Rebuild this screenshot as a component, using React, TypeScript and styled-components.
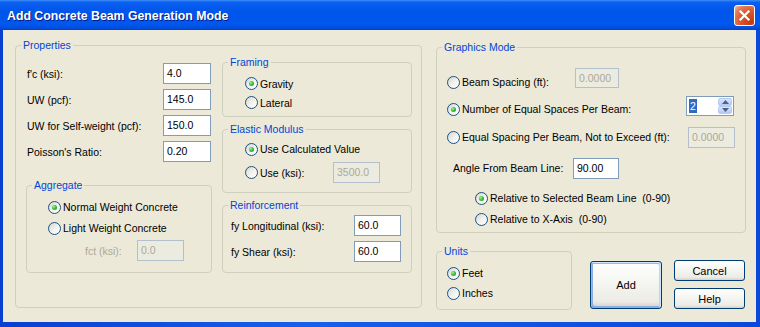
import styled, { createGlobalStyle } from 'styled-components';

const GlobalStyle = createGlobalStyle`
  html, body {
    margin: 0;
    padding: 0;
    background: #ece9d8;
  }

  body {
    font-family: 'Liberation Sans', Arial, sans-serif;
    font-size: 10.5px;
    color: #000;
  }

  * {
    box-sizing: border-box;
  }
`;

const Window = styled.div`
  width: 760px;
  height: 327px;
  display: flex;
  flex-direction: column;
  background: linear-gradient(to right, #0a3fd0, #1560ec 40%, #0a48dc);
  overflow: hidden;
`;

const TitleBar = styled.div`
  flex: none;
  height: 30px;
  display: flex;
  align-items: center;
  justify-content: space-between;
  padding: 0 5px 0 7px;
  background: linear-gradient(
    180deg,
    #3d8df5 0%,
    #0a5ef0 8%,
    #0055ea 40%,
    #0058ee 80%,
    #0050e0 92%,
    #0042c8 100%
  );
`;

const Title = styled.span`
  color: #fff;
  font-weight: 700;
  font-size: 12.3px;
  text-shadow: 1px 1px #0a1883;
  padding-top: 1px;
`;

const CloseButton = styled.div`
  width: 21px;
  height: 21px;
  border: 1px solid #fff;
  border-radius: 3px;
  display: flex;
  align-items: center;
  justify-content: center;
  background: radial-gradient(
    circle at 85% 85%,
    #c53a10 0%,
    #dc5a2c 50%,
    #e27a55 75%,
    #f3b9a0 100%
  );
`;

const Body = styled.div`
  flex: 1;
  margin: 0 4px 5px 3px;
  background: #ece9d8;
  display: flex;
  gap: 14px;
  padding: 15px 0 0 12px;
`;

const Group = styled.div<{ $w: number; $h: number; $mt?: number; $pad?: string }>`
  position: relative;
  flex: none;
  width: ${p => p.$w}px;
  height: ${p => p.$h}px;
  margin-top: ${p => p.$mt ?? 0}px;
  padding: ${p => p.$pad ?? '0'};
  border: 1px solid #d0d0bf;
  border-radius: 4px;
  display: flex;
  flex-direction: column;
`;

const Caption = styled.span`
  position: absolute;
  top: -8px;
  left: 5px;
  padding: 0 2px;
  line-height: 14px;
  background: #ece9d8;
  color: #0046d5;
  white-space: nowrap;
`;

const Columns = styled.div`
  display: flex;
  gap: 10px;
  align-items: flex-start;
`;

const LeftCol = styled.div`
  width: 186px;
  display: flex;
  flex-direction: column;
  padding-top: 1px;
`;

const RightCol = styled.div`
  width: 190px;
  display: flex;
  flex-direction: column;
  gap: 12px;
`;

const FieldList = styled.div<{ $pad?: string }>`
  display: flex;
  flex-direction: column;
  gap: 5px;
  padding: ${p => p.$pad ?? '0'};
`;

const FieldRow = styled.div`
  height: 21px;
  display: flex;
  align-items: center;
  justify-content: space-between;
`;

const Row = styled.div<{ $h?: number; $mt?: number; $pl?: number }>`
  flex: none;
  display: flex;
  align-items: center;
  height: ${p => p.$h ?? 20}px;
  margin-top: ${p => p.$mt ?? 0}px;
  padding-left: ${p => p.$pl ?? 0}px;
`;

const Label = styled.span<{ $w?: number; $off?: boolean }>`
  flex: none;
  width: ${p => (p.$w ? `${p.$w}px` : 'auto')};
  white-space: nowrap;
  color: ${p => (p.$off ? '#aca899' : '#000')};
`;

const Radio = styled.span<{ $on?: boolean }>`
  flex: none;
  position: relative;
  width: 13px;
  height: 13px;
  margin-right: 2px;
  border: 1px solid #1c5180;
  border-radius: 50%;
  background: linear-gradient(135deg, #d6d6d0 0%, #f3f3f0 55%, #fff 100%);

  &::after {
    content: '';
    display: ${p => (p.$on ? 'block' : 'none')};
    position: absolute;
    left: 3px;
    top: 3px;
    width: 5px;
    height: 5px;
    border-radius: 50%;
    background: radial-gradient(circle at 35% 35%, #a0f59c 0%, #3cbf38 45%, #1d941d 100%);
  }
`;

const TextBox = styled.div<{ $w: number; $h?: number; $off?: boolean; $lift?: number }>`
  flex: none;
  width: ${p => p.$w}px;
  height: ${p => p.$h ?? 21}px;
  margin-bottom: ${p => (p.$lift ?? 0) * 2}px;
  padding: 2px 3px 0;
  line-height: 14px;
  border: 1px solid ${p => (p.$off ? '#b3bfcd' : '#7f9db9')};
  background: ${p => (p.$off ? '#ecebdf' : '#fff')};
  color: ${p => (p.$off ? '#aca899' : '#000')};
  white-space: nowrap;
  overflow: hidden;
`;

const Spinner = styled.div<{ $lift?: number }>`
  flex: none;
  width: 48px;
  height: 20px;
  margin-bottom: ${p => (p.$lift ?? 0) * 2}px;
  border: 1px solid #7f9db9;
  background: #fff;
  display: flex;
  align-items: center;
  justify-content: space-between;
  padding: 1px;
`;

const Selected = styled.span`
  margin-left: 1px;
  padding: 0 1px;
  line-height: 14px;
  background: #316ac5;
  color: #fff;
`;

const SpinButtons = styled.div`
  display: flex;
  flex-direction: column;
  height: 100%;
`;

const SpinButton = styled.div`
  width: 14px;
  flex: 1;
  border: 1px solid #b7cbf3;
  border-radius: 2px;
  background: linear-gradient(180deg, #d9e4fd 0%, #c3d4fb 60%, #b3c7f5 100%);
  display: flex;
  align-items: center;
  justify-content: center;
`;

const Button = styled.div<{ $w: number; $h: number; $default?: boolean }>`
  flex: none;
  width: ${p => p.$w}px;
  height: ${p => p.$h}px;
  border: 1px solid #003c74;
  border-radius: 3px;
  display: flex;
  align-items: center;
  justify-content: center;
  font-size: 11px;
  background: linear-gradient(180deg, #fff 0%, #f4f4f0 50%, #ecebe6 86%, #d6d0c5 100%);
  box-shadow: ${p =>
    p.$default
      ? 'inset -1px 1px #cee7ff, inset 1px 2px #98b8ea, inset -2px 2px #bcd4f6, inset 1px -1px #89ade4, inset 2px -2px #89ade4'
      : 'none'};
`;

const RightPane = styled.div`
  width: 310px;
  display: flex;
  flex-direction: column;
`;

const BottomRow = styled.div`
  display: flex;
  align-items: flex-start;
  margin-top: 18px;
`;

const ButtonStack = styled.div`
  display: flex;
  flex-direction: column;
  gap: 7px;
  margin: 9px 0 0 12px;
`;

const DefaultSlot = styled.div`
  margin: 10px 0 0 18px;
`;

function Choice({ on, children, h, mt, pl }: { on?: boolean; children: React.ReactNode; h?: number; mt?: number; pl?: number }) {
  return (
    <Row $h={h} $mt={mt} $pl={pl}>
      <Radio $on={on} />
      {children}
    </Row>
  );
}

const properties = [
  ["f'c (ksi):", '4.0'],
  ['UW (pcf):', '145.0'],
  ['UW for Self-weight (pcf):', '150.0'],
  ["Poisson's Ratio:", '0.20'],
];

const reinforcement = [
  ['fy Longitudinal (ksi):', '60.0'],
  ['fy Shear (ksi):', '60.0'],
];

function Arrow({ up }: { up?: boolean }) {
  return (
    <svg width="7" height="4" viewBox="0 0 7 4">
      <path d={up ? 'M0 4 L3.5 0 L7 4 Z' : 'M0 0 L3.5 4 L7 0 Z'} fill="#4d6185" />
    </svg>
  );
}

export default function App() {
  return (
    <>
      <GlobalStyle />
      <Window>
        <TitleBar>
          <Title>Add Concrete Beam Generation Mode</Title>
          <CloseButton>
            <svg width="13" height="13" viewBox="0 0 13 13">
              <path d="M2.5 2.5 L10.5 10.5 M10.5 2.5 L2.5 10.5" stroke="#fff" strokeWidth="2.2" strokeLinecap="square" />
            </svg>
          </CloseButton>
        </TitleBar>

        <Body>
          <Group $w={407} $h={263} $pad="16px 9px 0 10px">
            <Caption>Properties</Caption>
            <Columns>
              <LeftCol>
                <FieldList $pad="0 1px">
                  {properties.map(([label, value]) => (
                    <FieldRow key={label}>
                      <Label>{label}</Label>
                      <TextBox $w={48}>{value}</TextBox>
                    </FieldRow>
                  ))}
                </FieldList>

                <Group $w={186} $h={88} $mt={23} $pad="11px 0 0 21px">
                  <Caption>Aggregate</Caption>
                  <Choice on>Normal Weight Concrete</Choice>
                  <Choice mt={1}>Light Weight Concrete</Choice>
                  <Row $h={21} $mt={2} $pl={37}>
                    <Label $w={52} $off>fct (ksi):</Label>
                    <TextBox $w={47} $off>0.0</TextBox>
                  </Row>
                </Group>
              </LeftCol>

              <RightCol>
                <Group $w={190} $h={55} $pad="11px 0 0 22px">
                  <Caption>Framing</Caption>
                  <Choice on h={19}>Gravity</Choice>
                  <Choice h={19}>Lateral</Choice>
                </Group>

                <Group $w={190} $h={64} $pad="9px 0 0 22px">
                  <Caption>Elastic Modulus</Caption>
                  <Choice on>Use Calculated Value</Choice>
                  <Choice h={21} mt={3}>
                    <Label $w={73}>Use (ksi):</Label>
                    <TextBox $w={47} $off>3500.0</TextBox>
                  </Choice>
                </Group>

                <Group $w={190} $h={68} $pad="9px 10px 0 8px">
                  <Caption>Reinforcement</Caption>
                  <FieldList>
                    {reinforcement.map(([label, value]) => (
                      <FieldRow key={label}>
                        <Label>{label}</Label>
                        <TextBox $w={47}>{value}</TextBox>
                      </FieldRow>
                    ))}
                  </FieldList>
                </Group>
              </RightCol>
            </Columns>
          </Group>

          <RightPane>
            <Group $w={310} $h={186} $mt={2} $pad="0 0 0 10px">
              <Caption>Graphics Mode</Caption>
              <Choice h={22} mt={23}>
                <Label $w={113}>Beam Spacing (ft):</Label>
                <TextBox $w={44} $h={20} $off $lift={4}>0.0000</TextBox>
              </Choice>
              <Choice on h={22} mt={5}>
                <Label $w={224}>Number of Equal Spaces Per Beam:</Label>
                <Spinner $lift={3}>
                  <Selected>2</Selected>
                  <SpinButtons>
                    <SpinButton><Arrow up /></SpinButton>
                    <SpinButton><Arrow /></SpinButton>
                  </SpinButtons>
                </Spinner>
              </Choice>
              <Choice h={22} mt={6}>
                <Label $w={226}>Equal Spacing Per Beam, Not to Exceed (ft):</Label>
                <TextBox $w={47} $off>0.0000</TextBox>
              </Choice>
              <Row $h={22} $mt={9} $pl={6}>
                <Label $w={120}>Angle From Beam Line:</Label>
                <TextBox $w={46}>90.00</TextBox>
              </Row>
              <Choice on mt={9} pl={28}>Relative to Selected Beam Line&nbsp; (0-90)</Choice>
              <Choice mt={1} pl={28}>Relative to X-Axis&nbsp; (0-90)</Choice>
            </Group>

            <BottomRow>
              <Group $w={136} $h={59} $pad="11px 0 0 10px">
                <Caption>Units</Caption>
                <Choice on>Feet</Choice>
                <Choice>Inches</Choice>
              </Group>
              <DefaultSlot>
                <Button $w={72} $h={48} $default>Add</Button>
              </DefaultSlot>
              <ButtonStack>
                <Button $w={71} $h={21}>Cancel</Button>
                <Button $w={71} $h={21}>Help</Button>
              </ButtonStack>
            </BottomRow>
          </RightPane>
        </Body>
      </Window>
    </>
  );
}
